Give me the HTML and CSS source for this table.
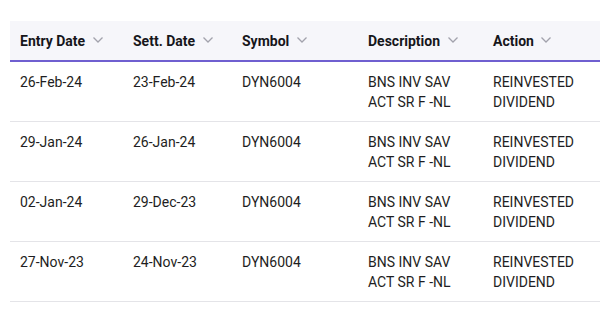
FILE: index.html
```html
<!DOCTYPE html>
<html>
<head>
<meta charset="utf-8">
<link rel="stylesheet" href="styles.css">
</head>
<body>
<div class="table">
  <div class="row head">
    <div class="cell">Entry Date <span class="chev"><svg width="12" height="8" viewBox="0 0 12 8"><path d="M1.5 1.5 L6 6 L10.5 1.5" fill="none" stroke="#a2a2ac" stroke-width="1.3"/></svg></span></div>
    <div class="cell">Sett. Date <span class="chev"><svg width="12" height="8" viewBox="0 0 12 8"><path d="M1.5 1.5 L6 6 L10.5 1.5" fill="none" stroke="#a2a2ac" stroke-width="1.3"/></svg></span></div>
    <div class="cell">Symbol <span class="chev"><svg width="12" height="8" viewBox="0 0 12 8"><path d="M1.5 1.5 L6 6 L10.5 1.5" fill="none" stroke="#a2a2ac" stroke-width="1.3"/></svg></span></div>
    <div class="cell">Description <span class="chev"><svg width="12" height="8" viewBox="0 0 12 8"><path d="M1.5 1.5 L6 6 L10.5 1.5" fill="none" stroke="#a2a2ac" stroke-width="1.3"/></svg></span></div>
    <div class="cell">Action <span class="chev"><svg width="12" height="8" viewBox="0 0 12 8"><path d="M1.5 1.5 L6 6 L10.5 1.5" fill="none" stroke="#a2a2ac" stroke-width="1.3"/></svg></span></div>
  </div>
  <div class="row">
    <div class="cell">26-Feb-24</div>
    <div class="cell">23-Feb-24</div>
    <div class="cell">DYN6004</div>
    <div class="cell">BNS INV SAV<br>ACT SR F -NL</div>
    <div class="cell">REINVESTED<br>DIVIDEND</div>
  </div>
  <div class="row">
    <div class="cell">29-Jan-24</div>
    <div class="cell">26-Jan-24</div>
    <div class="cell">DYN6004</div>
    <div class="cell">BNS INV SAV<br>ACT SR F -NL</div>
    <div class="cell">REINVESTED<br>DIVIDEND</div>
  </div>
  <div class="row">
    <div class="cell">02-Jan-24</div>
    <div class="cell">29-Dec-23</div>
    <div class="cell">DYN6004</div>
    <div class="cell">BNS INV SAV<br>ACT SR F -NL</div>
    <div class="cell">REINVESTED<br>DIVIDEND</div>
  </div>
  <div class="row">
    <div class="cell">27-Nov-23</div>
    <div class="cell">24-Nov-23</div>
    <div class="cell">DYN6004</div>
    <div class="cell">BNS INV SAV<br>ACT SR F -NL</div>
    <div class="cell">REINVESTED<br>DIVIDEND</div>
  </div>
</div>
</body>
</html>
```
FILE: styles.css
```css
html, body {
  margin: 0;
  padding: 0;
  background: #ffffff;
}
body {
  padding: 21px 0 0 10px;
  font-family: Roboto, "Liberation Sans", sans-serif;
  font-size: 14px;
  color: #1e1e22;
  overflow: hidden;
}
.table {
  width: 620px;
}
.row {
  display: grid;
  grid-template-columns: 113px 109px 126px 125px 1fr;
  border-bottom: 1px solid #e4e4e8;
  padding: 10px 0 9px;
  line-height: 20px;
}
.cell {
  padding-left: 10px;
  white-space: nowrap;
}
.row.head {
  background: #f6f6fa;
  border-bottom: 2px solid #6f5fd0;
  padding: 10px 0 8px;
  font-weight: 700;
  color: #16161a;
  line-height: 21px;
}
.chev {
  display: inline-block;
  margin-left: 3px;
  vertical-align: 2px;
}
.chev svg {
  display: block;
}
```
